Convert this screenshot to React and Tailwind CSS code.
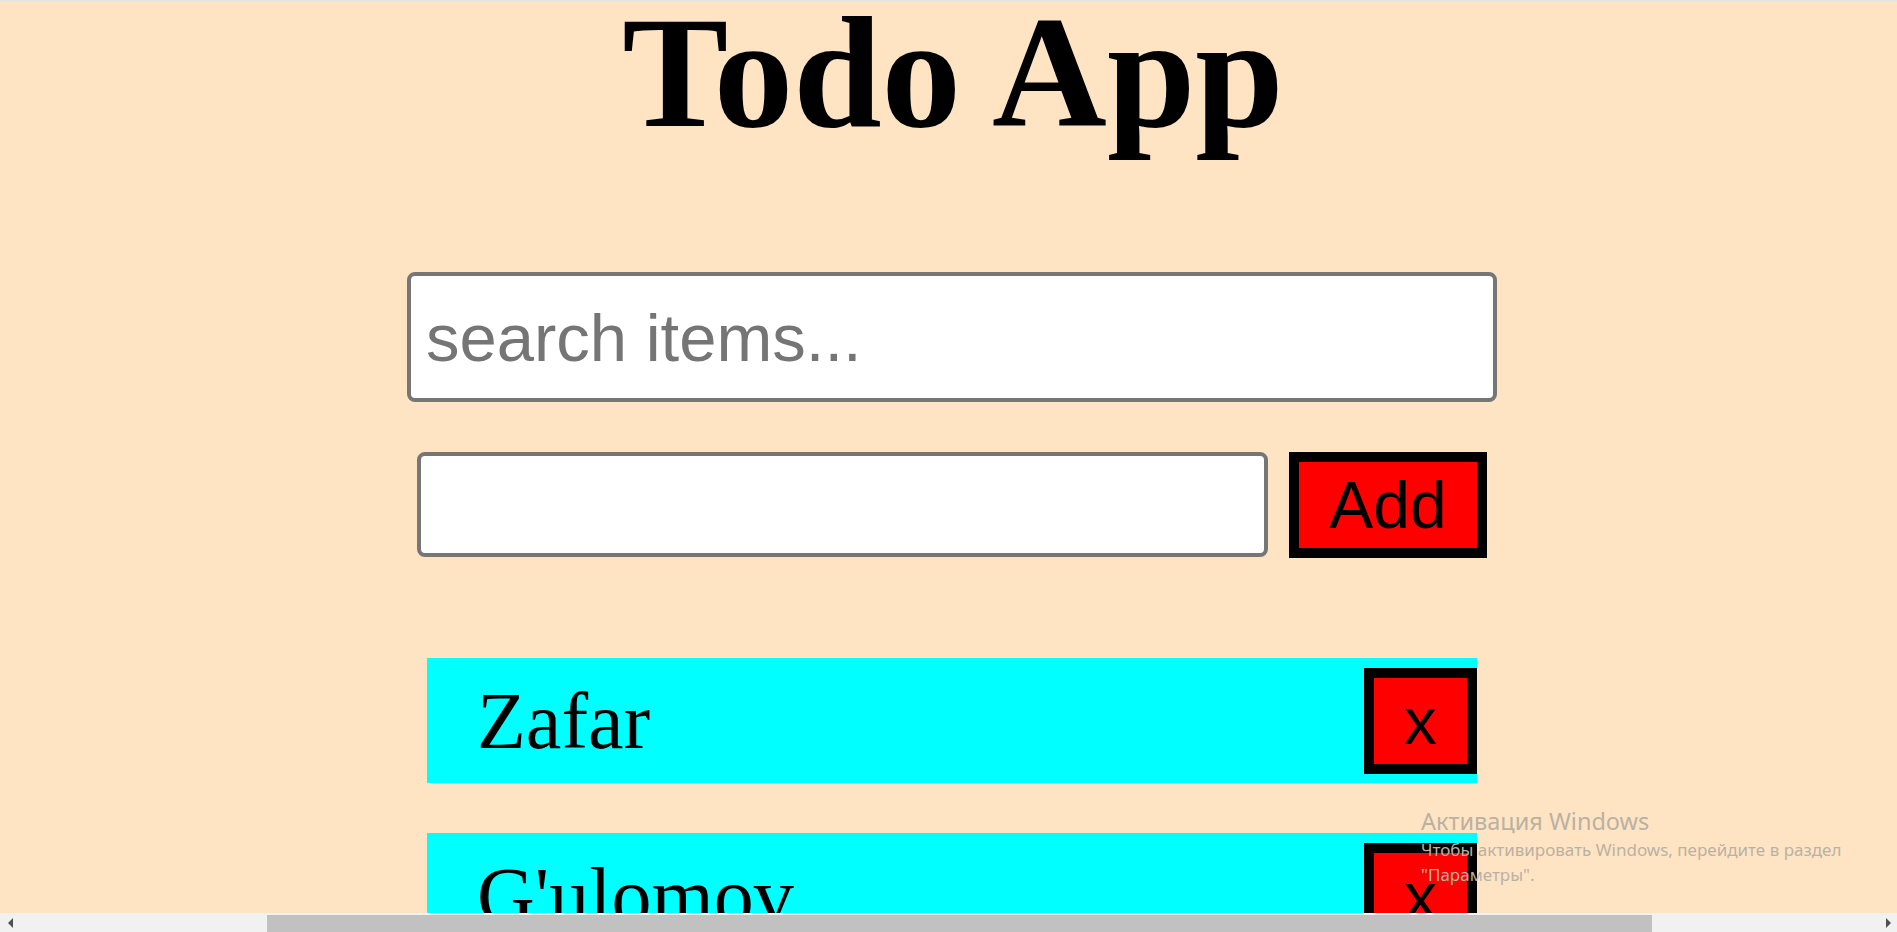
import React, { useState } from "react";

const TodoItem = ({ text, onDelete }) => {
  return (
    <li className="h-[125px] bg-[#00ffff] flex items-center justify-between pl-[50px]">
      <span className="font-['Liberation_Serif',serif] text-[80px] leading-[92px] text-black">
        {text}
      </span>
      <button
        onClick={onDelete}
        className="h-[106px] w-[113px] border-[10px] border-black bg-[#ff0000] font-['Liberation_Sans',sans-serif] text-[66px] leading-none text-black"
      >
        x
      </button>
    </li>
  );
};

const App = () => {
  const [items, setItems] = useState(["Zafar", "G'ulomov", "Todo"]);
  const [search, setSearch] = useState("");
  const [newItem, setNewItem] = useState("");

  const addItem = () => {
    if (!newItem.trim()) return;
    setItems([...items, newItem]);
    setNewItem("");
  };

  const shown = items.filter((i) => i.toLowerCase().includes(search.toLowerCase()));

  return (
    <div className="relative h-[932px] w-full overflow-hidden flex flex-col bg-[#ffe4c4] border-t border-[#e3e3e3]">
      <div className="flex-1 overflow-hidden">
        <h1 className="text-center pl-[9px] font-['Liberation_Serif',serif] font-bold text-[159px] leading-[143px] text-black">
          Todo App
        </h1>

        <div className="ml-[407px] w-[1090px] mt-[128px]">
          {/* search */}
          <input
            value={search}
            onChange={(e) => setSearch(e.target.value)}
            placeholder="search items..."
            className="block w-full h-[130px] bg-white border-4 border-[#767676] rounded-lg pl-[15px] font-['Liberation_Sans',sans-serif] text-[67px] text-black placeholder:text-[#757575] outline-none"
          />

          {/* add row */}
          <div className="flex items-start gap-[21px] px-[10px] mt-[50px]">
            <input
              value={newItem}
              onChange={(e) => setNewItem(e.target.value)}
              className="block w-[851px] h-[105px] bg-white border-4 border-[#767676] rounded-lg px-[15px] font-['Liberation_Sans',sans-serif] text-[66px] text-black outline-none"
            />
            <button
              onClick={addItem}
              className="h-[106px] w-[198px] border-[10px] border-black bg-[#ff0000] font-['Liberation_Sans',sans-serif] text-[66px] leading-none text-black"
            >
              Add
            </button>
          </div>

          {/* list */}
          <ul className="flex flex-col gap-[50px] px-[20px] mt-[100px]">
            {shown.map((item, idx) => (
              <TodoItem
                key={idx}
                text={item}
                onDelete={() => setItems(items.filter((_, i) => i !== idx))}
              />
            ))}
          </ul>
        </div>
      </div>

      {/* horizontal scrollbar */}
      <div className="h-[19px] bg-[#f1f1f1] flex items-end shrink-0">
        <div className="w-[267px] h-full flex items-center pl-[8px]">
          <div className="w-0 h-0 border-y-[5px] border-y-transparent border-r-[5px] border-r-[#505050]"></div>
        </div>
        <div className="w-[1385px] h-[17px] bg-[#c1c1c1]"></div>
        <div className="flex-1 h-full flex items-center justify-end pr-[6px]">
          <div className="w-0 h-0 border-y-[5px] border-y-transparent border-l-[5px] border-l-[#505050]"></div>
        </div>
      </div>

      {/* windows activation watermark */}
      <div className="absolute left-[1421px] top-[805px] font-['Noto_Sans',sans-serif] text-[#bab1a3] pointer-events-none">
        <div className="text-[23.5px] leading-[30px]">Активация Windows</div>
        <div className="text-[17px] leading-[25px] mt-[1px]">
          Чтобы активировать Windows, перейдите в раздел
        </div>
        <div className="text-[17px] leading-[25px]">"Параметры".</div>
      </div>
    </div>
  );
};

export default App;
